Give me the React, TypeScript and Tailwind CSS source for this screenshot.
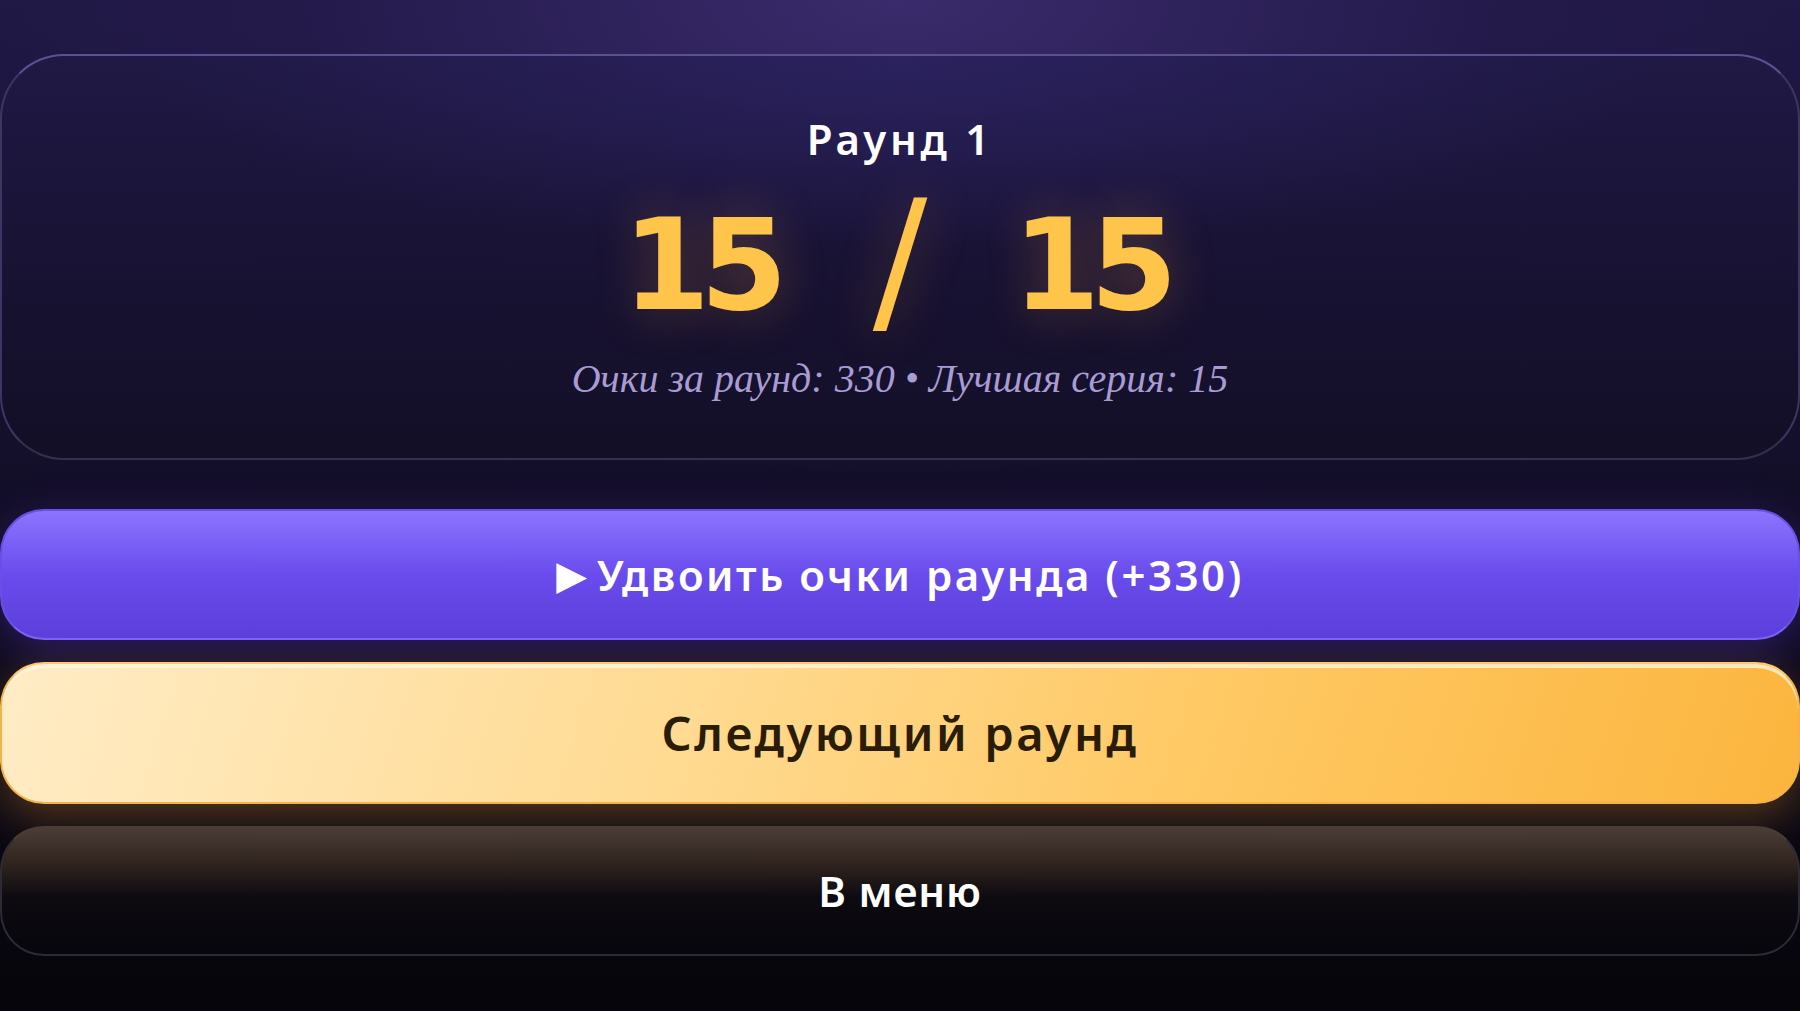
export default function App() {
    return (
        <main className="min-h-[1011px] w-full bg-[radial-gradient(ellipse_75%_55%_at_50%_0%,#3a2b6c_0%,#231a4a_45%,transparent_85%),linear-gradient(180deg,#1d1640_0%,#140f2a_45%,#0b0916_75%,#06050b_100%)] pt-[54px] pb-[54px] font-['Noto_Sans','DejaVu_Sans',sans-serif] text-white">
            {/* Score card */}
            <section className="flex h-[406px] flex-col items-center rounded-[64px] border-2 border-[#3d3663] border-t-[#5d5090] border-b-[#34304a] bg-[radial-gradient(ellipse_60%_70%_at_50%_0%,rgba(48,38,105,0.7)_0%,transparent_70%),linear-gradient(180deg,#1f1945_0%,#181233_55%,#130f26_100%)] pt-[62px]">
                <h2 className="text-[42px] leading-[42px] font-semibold tracking-[0.09em]">Раунд 1</h2>

                <div className="mt-[40px] flex h-[132px] items-center justify-center font-['DejaVu_Sans',sans-serif] text-[126px] leading-[132px] font-bold text-[#ffc44a] [text-shadow:0_0_50px_rgba(255,170,60,0.28)]">
                    <span className="w-[195px] pr-[10px] text-center tracking-[-0.08em]">15</span>
                    <span className="-mt-[12px] w-[195px] text-center text-[162px] font-normal">/</span>
                    <span className="w-[195px] pr-[10px] text-center tracking-[-0.08em]">15</span>
                </div>

                <p className="mt-[28px] font-['Liberation_Serif',serif] text-[40px] leading-[38px] italic text-[#a99cd4]">
                    Очки за раунд: 330 • Лучшая серия: 15
                </p>
            </section>

            {/* Actions */}
            <div className="mt-[49px] flex flex-col gap-[22px]">
                <button className="flex h-[131px] w-full items-center justify-center rounded-[44px] border-2 border-[#6a4fe6] border-b-[#7d62fa] bg-gradient-to-b from-[#8c74ff] via-[#6a4bec] to-[#5c3fdc] text-[42px] leading-none font-semibold tracking-[0.06em] text-white shadow-[0_12px_45px_rgba(110,70,255,0.3)]">
                    <span className="mr-[10px] font-['DejaVu_Sans',sans-serif] text-[40px] tracking-normal">▶&#xFE0E;</span>
                    Удвоить очки раунда (+330)
                </button>

                <button className="flex h-[142px] w-full items-center justify-center rounded-[44px] border-2 border-[#f6b24a] border-t-[#ffc86a] bg-[linear-gradient(108deg,#ffecc6_0%,#ffdc96_35%,#ffc862_68%,#fbb53e_100%)] text-[47px] leading-none font-semibold tracking-[0.055em] text-[#2a1c06] shadow-[inset_0_4px_0_rgba(255,246,228,0.75),0_14px_45px_rgba(255,160,50,0.3)]">
                    Следующий раунд
                </button>

                <button className="flex h-[130px] w-full items-center justify-center rounded-[44px] border-2 border-[#2c2a36] border-t-[#4a3d38] bg-[linear-gradient(180deg,#4b3c36_0%,#30241f_28%,#0d0a10_55%,#07060d_100%)] text-[42px] leading-none font-semibold tracking-[0.02em] text-white">
                    В меню
                </button>
            </div>
        </main>
    );
}
